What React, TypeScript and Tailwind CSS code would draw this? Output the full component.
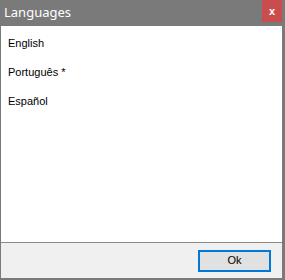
import React from 'react';

const languages = ['English', 'Português *', 'Español'];

export default function App() {
  return (
    <div className="w-[285px] h-[280px] flex flex-col bg-[#7a7a7a] pl-px pr-[3px] pb-[2px] font-['Liberation_Sans',sans-serif]">
      {/* Title bar */}
      <div className="h-[26px] flex items-start justify-between shrink-0">
        <div className="pl-[3px] pt-[3px] text-[13px] leading-[18px] text-white font-['Noto_Sans',sans-serif]">Languages</div>
        <button className="w-[20px] h-[22px] bg-[#c94c4f] text-white text-[11px] font-bold leading-none flex items-center justify-center">
          x
        </button>
      </div>

      {/* List */}
      <div className="flex-1 bg-white border-b border-[#8a8a8a] flex flex-col pt-[10px] pl-[7px]">
        {languages.map(lang => (
          <div key={lang} className="h-[29px] text-[11px] leading-[15px] text-black">
            {lang}
          </div>
        ))}
      </div>

      {/* Footer */}
      <div className="h-[35px] shrink-0 bg-[#f0f0f0] flex items-center justify-end pr-[11px]">
        <button className="w-[73px] h-[22px] bg-[#e1e1e1] border-2 border-[#0078d7] text-[11px] text-black leading-none">
          Ok
        </button>
      </div>
    </div>
  );
}
